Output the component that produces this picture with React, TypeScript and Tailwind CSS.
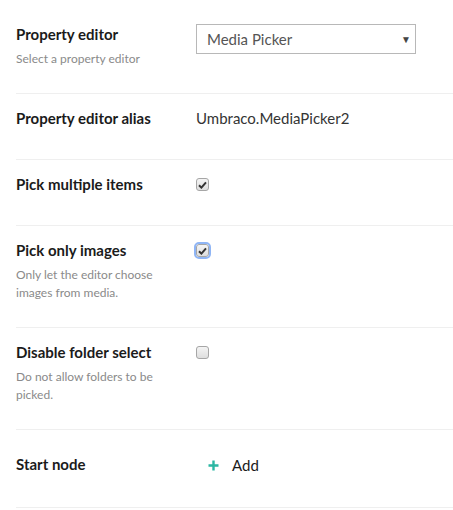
import React from "react";

function Checkbox({ checked, focused }: { checked?: boolean; focused?: boolean }) {
  return (
    <div
      className={
        "flex h-[13px] w-[13px] items-center justify-center rounded-[3px] border border-[#a6a6a6] bg-gradient-to-b from-[#f4f4f4] to-[#dedede] " +
        (focused ? "outline-2 outline-[#8fb5f5]" : "")
      }
    >
      {checked && (
        <svg width="9" height="8" viewBox="0 0 9 8">
          <path d="M1 4.2 L3.4 6.6 L8 1.4" fill="none" stroke="#333" strokeWidth="2" />
        </svg>
      )}
    </div>
  );
}

function Row({
  label,
  description,
  children,
  className = "",
}: {
  label: string;
  description?: string[];
  children?: React.ReactNode;
  className?: string;
}) {
  return (
    <div className={"flex border-b border-[#efefef] " + className}>
      <div className="w-[180px] shrink-0">
        <div className="mb-[6px] text-[15px] font-bold leading-5 text-[#1b1b1b]">{label}</div>
        {description && (
          <div className="text-[12px] leading-[18px] text-[#8a8a8a]">
            {description.map((d) => (
              <div key={d}>{d}</div>
            ))}
          </div>
        )}
      </div>
      <div className="flex-1">{children}</div>
    </div>
  );
}

export default function App() {
  return (
    <div className="h-[510px] w-[453px] overflow-hidden bg-white pl-4 font-['Lato',sans-serif]">
      <Row label="Property editor" description={["Select a property editor"]} className="pt-[24px] pb-[25px]">
        <div className="relative flex h-[30px] w-[220px] items-center border border-[#b8b8b8] pl-[10px] text-[15px] text-[#555]">
          Media Picker
          <span className="absolute right-[4px] top-[7px] text-[10px] text-[#444]">▼</span>
        </div>
      </Row>
      <Row label="Property editor alias" className="pt-[14px] pb-[25px]">
        <div className="text-[15px] leading-5 text-[#343434]">Umbraco.MediaPicker2</div>
      </Row>
      <Row label="Pick multiple items" className="pt-[14px] pb-[25px]">
        <div className="pt-[4px]">
          <Checkbox checked />
        </div>
      </Row>
      <Row
        label="Pick only images"
        description={["Only let the editor choose", "images from media."]}
        className="pt-[14px] pb-[25px]"
      >
        <div className="pt-[4px]">
          <Checkbox checked focused />
        </div>
      </Row>
      <Row
        label="Disable folder select"
        description={["Do not allow folders to be", "picked."]}
        className="pt-[14px] pb-[25px]"
      >
        <div className="pt-[4px]">
          <Checkbox />
        </div>
      </Row>
      <Row label="Start node" className="pt-[24px] pb-[27px]">
        <div className="flex items-center pl-[12px] pt-px text-[15px] leading-5 text-[#1b1b1b]">
          <svg width="11" height="11" viewBox="0 0 11 11" className="mr-[13px]">
            <path d="M5.5 0.5 V10.5 M0.5 5.5 H10.5" stroke="#2bb7a3" strokeWidth="2.4" />
          </svg>
          Add
        </div>
      </Row>
    </div>
  );
}
